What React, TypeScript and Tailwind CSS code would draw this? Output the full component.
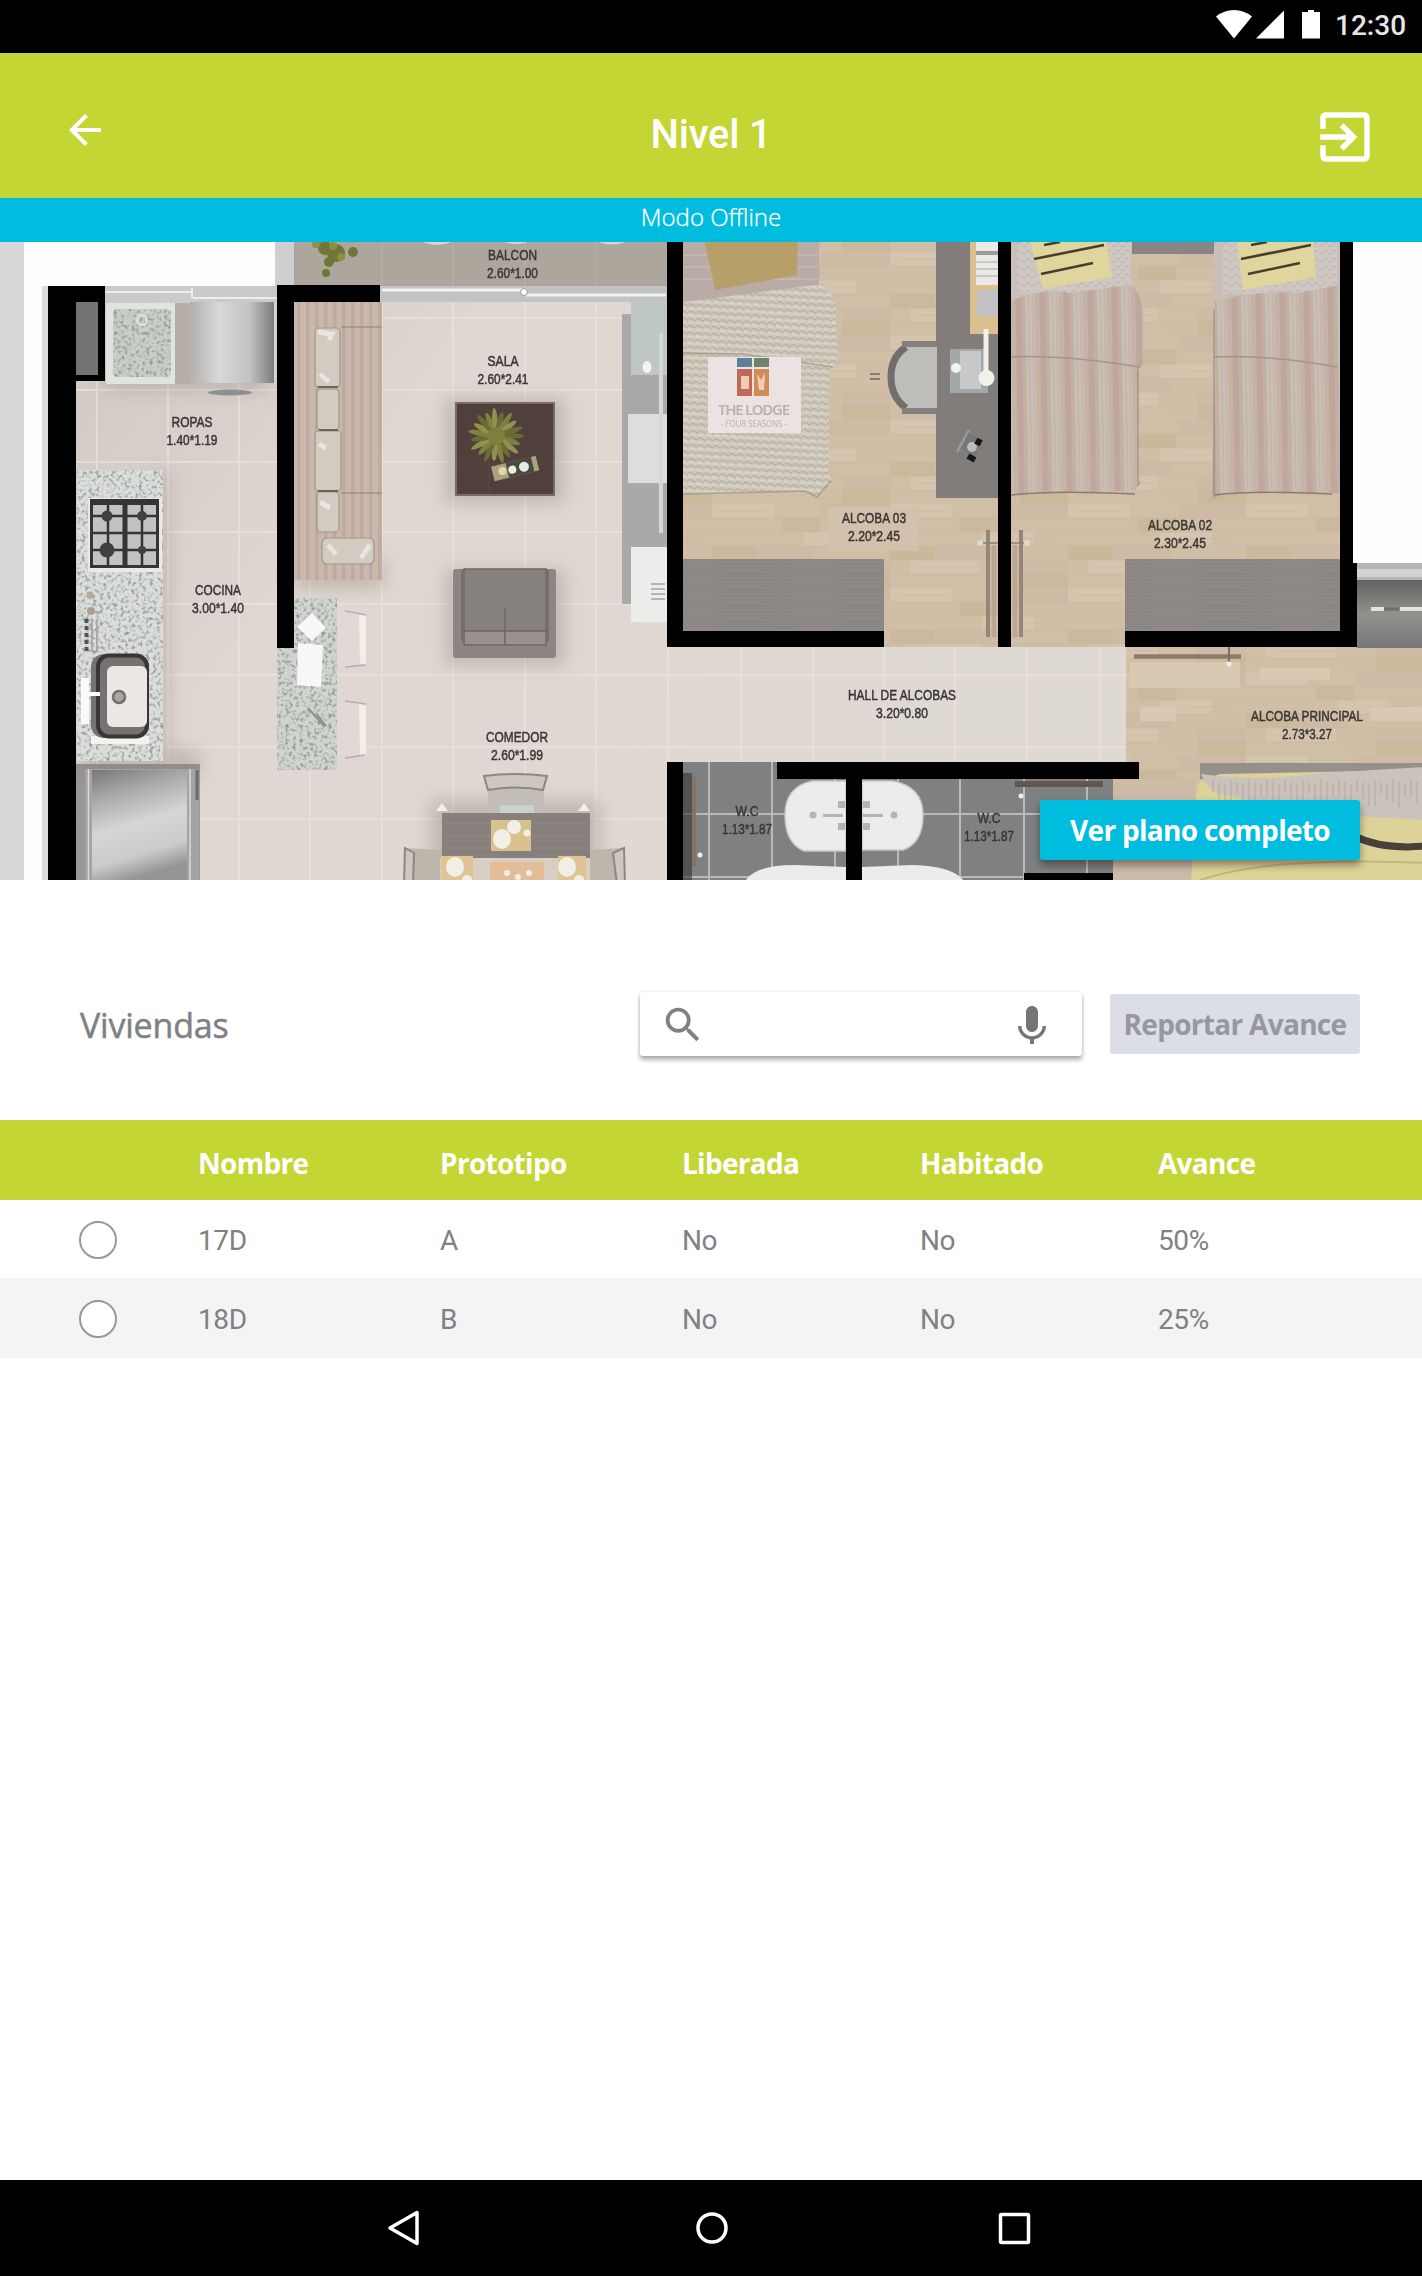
import React from "react";

const TILE_X = [97, 168, 239, 310, 382, 453, 525, 596, 668, 741, 813, 884, 955, 1027, 1100];
const TILE_Y = [318, 390, 462, 532, 604, 675, 747, 819];
const WC_X = [709, 772, 835, 898, 960, 1024, 1087];

type Room = { x: number; y: number; size: [number, number]; lines: [string, string] };

const ROOMS: Room[] = [
  { x: 192, y: 427, size: [41, 51], lines: ["ROPAS", "1.40*1.19"] },
  { x: 218, y: 595, size: [46, 52], lines: ["COCINA", "3.00*1.40"] },
  { x: 512.5, y: 260, size: [49, 51], lines: ["BALCON", "2.60*1.00"] },
  { x: 503, y: 366, size: [31, 51], lines: ["SALA", "2.60*2.41"] },
  { x: 517, y: 742, size: [62, 52], lines: ["COMEDOR", "2.60*1.99"] },
  { x: 874, y: 523, size: [64, 52], lines: ["ALCOBA 03", "2.20*2.45"] },
  { x: 1180, y: 530, size: [64, 52], lines: ["ALCOBA 02", "2.30*2.45"] },
  { x: 902, y: 700, size: [108, 52], lines: ["HALL DE ALCOBAS", "3.20*0.80"] },
  { x: 1307, y: 721, size: [112, 50], lines: ["ALCOBA PRINCIPAL", "2.73*3.27"] },
  { x: 747, y: 816, size: [23, 50], lines: ["W.C", "1.13*1.87"] },
  { x: 989, y: 823, size: [23, 50], lines: ["W.C", "1.13*1.87"] },
];

const WALLS: [number, number, number, number][] = [
  [48, 286, 28, 594],
  [48, 286, 57, 16],
  [98, 286, 7, 95],
  [76, 375, 29, 6],
  [277, 285, 17, 363],
  [277, 285, 103, 17],
  [667, 242, 16, 405],
  [667, 631, 217, 16],
  [998, 242, 13, 405],
  [1340, 242, 13, 405],
  [1340, 563, 17, 84],
  [1125, 631, 232, 16],
  [777, 762, 362, 17],
  [667, 762, 16, 118],
  [846, 779, 16, 101],
  [1024, 873, 89, 7],
];

function Plant({ x, y, r }: { x: number; y: number; r: number }) {
  return (
    <g transform={`translate(${x} ${y})`}>
      {Array.from({ length: 19 }, (_, i) => (
        <ellipse
          key={i}
          cx={r * 0.52}
          rx={r * (i % 2 ? 0.38 : 0.48)}
          ry={r * 0.1}
          fill={["#6a6c35", "#7f7f42", "#93924d"][i % 3]}
          transform={`rotate(${i * 19})`}
        />
      ))}
      <circle r={r * 0.32} fill="#7d7f3f" />
    </g>
  );
}

function StripedBed({ x, w, flip }: { x: number; w: number; flip?: boolean }) {
  const right = x + w;
  return (
    <g>
      <rect x={x} y="242" width={flip ? w : w - 12} height="60" fill="#c9bfb8" />
      <rect x={x + (flip ? 9 : 6)} y="242" width={flip ? w - 12 : w - 18} height="52" fill="url(#linen)" />
      <path
        d={flip ? `M${x + 23} 242h76l3 35-73 13z` : `M${x + 19} 242h76l6 35-69 12z`}
        fill="#e0d59d"
      />
      <g stroke="#473d31" strokeWidth="2.6" transform={`translate(${x + (flip ? 4 : 0)} 0)`}>
        <path d="M33 245 49 242M23 259 93 245M30 274 82 263" />
      </g>
      <path
        d={
          flip
            ? `M${x} 301Q${x + 40} 290 ${x + 85} 293L${right} 285V493H${x + 13}L${x - 2} 500L${x + 1} 370Z`
            : `M${x} 301Q${x + 30} 288 ${x + 60} 293L${x + 118} 285Q${right} 291 ${right} 318V365L${right - 5} 370V482L${right - 1} 481L${right - 13} 497L${right - 22} 491L${x} 495Z`
        }
        fill="url(#stripes)"
      />
      <path
        d={`M${x} 357Q${x + 50} 354 ${right - 3} 367`}
        fill="none"
        stroke="#a6938a"
        strokeWidth="1.6"
      />
      <path d={`M${x} 495Q${x + 40} 490 ${right - 8} 494`} fill="none" stroke="#8f796c" strokeWidth="1.6" />
      <path
        d={flip ? `M${x} 310V494` : `M${right - 5} 370V486`}
        stroke="#90807a"
        strokeWidth="1.5"
        opacity="0.6"
      />
    </g>
  );
}

function FloorPlan() {
  return (
    <svg viewBox="0 242 1422 638" className="block h-[638px] w-full" aria-label="Plano del nivel 1">
      <defs>
        <linearGradient id="floor" x1="0" x2="1" y2="0.4">
          <stop offset="0" stopColor="#cfc8c3" />
          <stop offset="0.35" stopColor="#dfd7d1" />
          <stop offset="1" stopColor="#dfd9d4" />
        </linearGradient>
        <linearGradient id="steel">
          <stop offset="0" stopColor="#b3b0ac" />
          <stop offset="0.35" stopColor="#d8d8da" />
          <stop offset="0.7" stopColor="#c3c3c3" />
          <stop offset="1" stopColor="#7d7d7d" />
        </linearGradient>
        <linearGradient id="fridge" x1="0" x2="0.25" y1="0" y2="1">
          <stop offset="0" stopColor="#777777" />
          <stop offset="0.25" stopColor="#a8a8a8" />
          <stop offset="0.55" stopColor="#d6d6d6" />
          <stop offset="0.82" stopColor="#cacaca" />
          <stop offset="1" stopColor="#959595" />
        </linearGradient>
        <linearGradient id="outer" y2="1" x2="0">
          <stop offset="0" stopColor="#626260" />
          <stop offset="0.5" stopColor="#91918e" />
          <stop offset="1" stopColor="#777777" />
        </linearGradient>
        <pattern id="wood" width="178" height="84" patternUnits="userSpaceOnUse">
          <rect width="178" height="84" fill="#d0bea6" />
          <path d="M0 0h62v14H0zM92 28h52v14H92zM20 56h70v14H20z" fill="#d5c4ae" />
          <path d="M70 14h38v14H70zM0 42h44v14H0zM130 70h48v14h-48z" fill="#cbb99c" />
          <path d="M110 0h68v14h-68zM44 42h58v14H44zM130 56h48v14h-48z" fill="#cfbba5" />
          <path d="M0 14h178M0 28h178M0 42h178M0 56h178M0 70h178" stroke="#c6b299" strokeWidth="0.8" opacity="0.5" />
          <path d="M8 7h46M120 35h44M30 63h60M65 21h50M5 49h40M100 78h60" stroke="#c3ae93" strokeWidth="1" opacity="0.45" />
        </pattern>
        <pattern id="stripes" width="24" height="40" patternUnits="userSpaceOnUse" patternTransform="rotate(-1)">
          <rect width="24" height="40" fill="#c5b3a6" />
          <rect x="2" width="6" height="40" fill="#bfa79d" />
          <rect x="12" width="9" height="40" fill="#cac0b6" />
          <path d="M15 0v40M19 0v40M10 0v40" stroke="#b9aaa0" strokeWidth="0.8" />
        </pattern>
        <pattern id="sofa" width="9" height="20" patternUnits="userSpaceOnUse">
          <rect width="9" height="20" fill="#cbb8ad" />
          <rect width="3.5" height="20" fill="#bfaa9f" />
        </pattern>
        <pattern id="knit" width="8" height="7" patternUnits="userSpaceOnUse" patternTransform="rotate(3)">
          <rect width="8" height="7" fill="#cfc8bc" />
          <path d="M0 2.5q3-2 5 .5l3 1" fill="none" stroke="#b4ab9c" strokeWidth="1.3" />
          <path d="M0 5.8h6" stroke="#ded9cf" strokeWidth="1.3" />
        </pattern>
        <pattern id="linen" width="9" height="8" patternUnits="userSpaceOnUse">
          <rect width="9" height="8" fill="#cfc7c2" />
          <path d="M0 3h4M5 6h4" stroke="#bcb2ac" strokeWidth="1.2" />
        </pattern>
        <pattern id="grain" width="120" height="16" patternUnits="userSpaceOnUse">
          <rect width="120" height="16" fill="#8d8886" />
          <path d="M0 4h70M40 10h80M0 14h50" stroke="#827c7a" strokeWidth="1" opacity="0.6" />
          <path d="M60 6h50M10 11h30" stroke="#969190" strokeWidth="1" opacity="0.5" />
        </pattern>
        <filter id="speckle" x="0" y="0" width="1" height="1" colorInterpolationFilters="sRGB">
          <feTurbulence type="fractalNoise" baseFrequency="0.28" numOctaves="2" seed="4" />
          <feColorMatrix values="0 0 0 0 0.5  0 0 0 0 0.54  0 0 0 0 0.51  0 0 0 2.6 -1.25" />
          <feComposite in2="SourceGraphic" operator="in" result="n" />
          <feMerge>
            <feMergeNode in="SourceGraphic" />
            <feMergeNode in="n" />
          </feMerge>
        </filter>
        <filter id="soft" x="-20%" y="-20%" width="140%" height="140%" colorInterpolationFilters="sRGB">
          <feGaussianBlur stdDeviation="9" />
        </filter>
        <filter id="lens" x="0" y="0" width="1" height="1" colorInterpolationFilters="sRGB">
          <feGaussianBlur stdDeviation="0.7" />
        </filter>
      </defs>

      <rect x="0" y="242" width="1422" height="638" fill="#fefefe" />
      <g filter="url(#lens)">
        <rect x="20" y="238" width="1406" height="646" fill="#fefefe" />
        <rect x="42" y="286" width="6" height="598" fill="#dedad6" />

        {/* tiled floor */}
        <rect x="76" y="286" width="1064" height="598" fill="url(#floor)" />
        <g stroke="#ebe4dc" strokeWidth="2" opacity="0.7">
          {TILE_X.map((x) => (
            <path key={x} d={`M${x} 300V884`} />
          ))}
          {TILE_Y.map((y) => (
            <path key={y} d={`M76 ${y}H1126`} />
          ))}
        </g>
        <g filter="url(#soft)" fill="#877b73" opacity="0.35">
          <rect x="105" y="372" width="165" height="18" />
          <rect x="445" y="398" width="120" height="105" />
          <rect x="445" y="570" width="120" height="95" />
          <rect x="430" y="800" width="170" height="80" />
          <rect x="80" y="750" width="120" height="25" />
          <rect x="294" y="560" width="90" height="28" />
          <rect x="155" y="470" width="14" height="280" />
        </g>

        {/* balcony */}
        <rect x="275" y="238" width="20" height="48" fill="#cfced0" />
        <rect x="294" y="238" width="373" height="48" fill="#aca69d" />
        <path d="M382 238V286M453 238V286M525 238V286M596 238V286" stroke="#b5aea3" strokeWidth="1.5" />
        <g fill="#6f7638">
          <circle cx="325" cy="248" r="7" />
          <circle cx="336" cy="253" r="9" />
          <circle cx="329" cy="262" r="5" />
          <circle cx="326" cy="273" r="4" />
          <circle cx="353" cy="252" r="5" />
        </g>
        <g fill="#8c9046">
          <circle cx="333" cy="246" r="4" />
          <circle cx="341" cy="257" r="4" />
          <circle cx="316" cy="244" r="4" />
        </g>
        <path d="M422 242q15 6 30 0M504 242q12 4 24 0M598 242q14 5 28 0" fill="#d8d6cf" />
        <rect x="380" y="286" width="287" height="16" fill="#c2c3c4" />
        <path d="M382 290H524M526 295H666" stroke="#f2f3f4" strokeWidth="3" />
        <circle cx="524" cy="292" r="3.5" fill="#ffffff" stroke="#999999" />
        <rect x="105" y="286" width="172" height="16" fill="#cbcaca" />
        <path d="M105 292H191M193 298H277M192 288v10" stroke="#ededed" strokeWidth="2" />

        {/* laundry */}
        <rect x="76" y="302" width="22" height="73" fill="#757372" />
        <rect x="106" y="303" width="69" height="81" fill="#e0e4de" />
        <rect x="113" y="309" width="58" height="68" rx="4" fill="#c8cfc8" filter="url(#speckle)" />
        <circle cx="142" cy="320" r="5" fill="none" stroke="#dfe4de" strokeWidth="2" />
        <rect x="175" y="303" width="16" height="81" fill="#b5aea7" />
        <rect x="190" y="302" width="84" height="81" fill="url(#steel)" />
        <rect x="274" y="302" width="3" height="81" fill="#d5d4d2" />
        <ellipse cx="230" cy="392.5" rx="22" ry="3" fill="#8b9191" />

        {/* kitchen */}
        <rect x="77" y="470" width="86" height="291" fill="#dcdedb" filter="url(#speckle)" />
        <rect x="88" y="498" width="74" height="74" fill="#e9e9e6" />
        <rect x="90" y="499" width="69" height="69" fill="#c2c2c2" />
        <g stroke="#343434" strokeWidth="3" fill="none">
          <rect x="91.5" y="500.5" width="66" height="66" />
          <path d="M125 500V567M108 500V567M142 500V567" strokeWidth="2.5" />
          <path d="M91 516H158M91 533H158M91 550H158" strokeWidth="2.5" />
          <path d="M125 500V567M91 502.5H158" strokeWidth="5" />
        </g>
        <g fill="#404040">
          <circle cx="107" cy="516" r="5.5" />
          <circle cx="142" cy="516" r="5" />
          <circle cx="107" cy="550" r="7.5" />
          <circle cx="142" cy="550" r="4" />
        </g>
        <circle cx="90" cy="595" r="3.5" fill="#baa999" />
        <circle cx="91" cy="611" r="4" fill="#ac9d90" />
        <path d="M86.5 619V652" stroke="#555555" strokeWidth="4" strokeDasharray="4 3" />
        <path d="M92 619V652M97 619V652" stroke="#9b9b9b" strokeWidth="1.5" />
        <rect x="91" y="736" width="58" height="8" fill="#f3f2ef" />
        <rect x="91" y="654" width="58" height="84" rx="13" fill="#777272" />
        <rect x="98" y="655.5" width="49" height="81" rx="11" fill="none" stroke="#383635" strokeWidth="4" />
        <rect x="107" y="666" width="40" height="61" rx="6" fill="#ece7e5" />
        <circle cx="119" cy="697" r="6" fill="#aaa8a6" stroke="#73706e" strokeWidth="2.5" />
        <path d="M81 678h8v46h-8zM88 692h12v4H88z" fill="#fafafa" />
        <rect x="76" y="764" width="124" height="120" fill="#6e6c6a" opacity="0.6" />
        <rect x="85" y="769" width="114" height="115" fill="#a2a3a4" />
        <rect x="92" y="770" width="95" height="114" fill="url(#fridge)" />
        <path d="M88.5 769V884M190 769V884" stroke="#d9dadb" strokeWidth="1.5" />
        <path d="M197 770V800" stroke="#6b6b6b" strokeWidth="3" />

        {/* breakfast bar */}
        <rect x="337" y="612" width="28" height="54" fill="#e3d9d4" />
        <rect x="337" y="702" width="28" height="54" fill="#e3d9d4" />
        <path d="M359 613l7 2v50l-6-2zM359 704l7 2v50l-6-2z" fill="#f1efec" />
        <path d="M345 611l21 4M345 667l21-2M345 701l21 3M345 758l20-3" stroke="#b5afa9" strokeWidth="1.5" />
        <path d="M294 598h43v172h-60V648h17z" fill="#d1d4cf" filter="url(#speckle)" />
        <path d="M312 613l14 15-14 13-15-14zM298 643l25 2-2 42-24-2z" fill="#f7f7f7" />
        <path d="M308 708l16 18M316 713l10 13" stroke="#8d938e" strokeWidth="2" />

        {/* living room */}
        <rect x="294" y="302" width="88" height="278" fill="url(#sofa)" />
        <path d="M341 327H382M341 493H382" stroke="#a58f85" strokeWidth="1.5" />
        <g fill="#d1cbc2" stroke="#a1958b" strokeWidth="1.2">
          <rect x="315" y="328" width="25" height="59" rx="4" />
          <rect x="317" y="389" width="22" height="41" rx="4" />
          <rect x="315" y="431" width="26" height="60" rx="4" />
          <rect x="317" y="492" width="22" height="40" rx="4" />
          <rect x="322" y="538" width="52" height="26" rx="5" />
        </g>
        <path d="M318 387h20M319 430h19M318 491h20" stroke="#6f6359" strokeWidth="2" />
        <path d="M318 332l14 2-3 6M320 374l9 8M319 444l7 4M320 502l10 6M328 545l8 9M370 545l-9 13" stroke="#e9e5de" strokeWidth="5" fill="none" />
        <rect x="456" y="403" width="98" height="92" fill="#503f3b" stroke="#776d68" strokeWidth="2" />
        <path d="M489 404V494M457 464H553" stroke="#5a4944" strokeWidth="1" />
        <Plant x={496} y={436} r={28} />
        <g transform="rotate(-14 515 468)">
          <rect x="492" y="461" width="46" height="15" fill="#aaa17f" />
          <rect x="507" y="461" width="26" height="15" fill="#494b3c" />
          <circle cx="502" cy="468" r="4" fill="#e6d8a5" />
          <circle cx="512" cy="469" r="4" fill="#edf0dd" />
          <circle cx="524" cy="469" r="5" fill="#e3ebe5" />
        </g>
        <rect x="453" y="569" width="103" height="89" rx="3" fill="#8c8583" />
        <rect x="464" y="569" width="82" height="62" fill="#86807e" stroke="#6e6765" strokeWidth="1.5" />
        <path d="M462 570V641M548 570V641M464 631h82v14h-82zM505 608V645" fill="#979190" stroke="#6e6765" strokeWidth="1.5" />
        <rect x="622" y="314" width="45" height="290" fill="#a9a9a8" />
        <rect x="631" y="302" width="36" height="73" fill="#bec7c3" />
        <ellipse cx="647" cy="367" rx="4.5" ry="6" fill="#f5f5ee" />
        <rect x="628" y="414" width="39" height="69" fill="#dddddf" />
        <path d="M659 333h4v200h-4z" fill="#d4d8d5" />
        <rect x="631" y="547" width="36" height="75" fill="#ecedeb" />
        <path d="M651 584h14M651 589h14M651 594h14M651 599h14" stroke="#b4b4b1" strokeWidth="2" />

        {/* dining table */}
        <rect x="488" y="784" width="56" height="30" fill="#c3beb5" />
        <path d="M484 776q33-4 63 0l-4 14q-28-5-55 0z" fill="#ccc8c0" stroke="#8d8780" strokeWidth="2" />
        <rect x="500" y="805" width="34" height="8" fill="#c9d3ce" />
        <path d="M404 848l38 2v34h-38zM590 850l34-2v36h-34z" fill="#bcb6ac" />
        <path d="M405 848l9 5-1 31h-9zM624 848l-11 5 4 31h8z" fill="#ccc8c0" stroke="#8d8780" strokeWidth="2" />
        <rect x="442" y="813" width="148" height="71" fill="#87807c" />
        <path d="M444 823H589M444 836H589M444 848H589" stroke="#928b86" strokeWidth="1" />
        <rect x="440" y="858" width="150" height="26" fill="#d8cec3" />
        <rect x="491" y="820" width="40" height="31" fill="#d8c08f" />
        <path d="M441 856h32v28h-32zM558 856h28v28h-28z" fill="#e0c494" />
        <rect x="490" y="862" width="54" height="22" fill="#e2bd98" />
        <g fill="#f2f0e6">
          <ellipse cx="502" cy="839" rx="9" ry="10" />
          <circle cx="514" cy="827" r="7" />
          <circle cx="527" cy="833" r="3.5" />
          <ellipse cx="455" cy="867" rx="9" ry="10" />
          <ellipse cx="567" cy="867" rx="9" ry="10" />
          <circle cx="467" cy="880" r="5" />
          <circle cx="579" cy="880" r="5" />
          <circle cx="507" cy="873" r="3" />
          <circle cx="518" cy="877" r="3" />
          <circle cx="529" cy="873" r="3" />
          <path d="M436 811l6-8 6 8zM578 811l6-8 6 8z" />
        </g>

        {/* bedroom floors */}
        <rect x="683" y="238" width="315" height="409" fill="url(#wood)" />
        <rect x="1011" y="238" width="329" height="409" fill="url(#wood)" />
        <rect x="1126" y="647" width="300" height="237" fill="url(#wood)" />
        <rect x="1113" y="779" width="83" height="105" fill="#ccbba7" />
        <path d="M1130 662h110v26h-110zM1260 668h70v12h-70zM1140 707h36v14h-36zM1370 707h56v14h-56z" fill="#d9c8b2" />
        <rect x="828" y="507" width="90" height="44" fill="#d3c1ad" />

        {/* bedroom 03 */}
        <path d="M683 238h136v54l-136 14z" fill="#b9aba5" />
        <path d="M683 255H818M683 267H818M683 279H818" stroke="#c6bab4" strokeWidth="1.5" />
        <path d="M704 238h94l-1 37-82 15z" fill="#b79f69" />
        <path d="M683 494V302l85-11 55-7 12 16 3 63-8 4-2 105 5 11-17 14-10-5z" fill="url(#knit)" />
        <path d="M683 353l60 1 90 13M683 494l122-3 12 6 14-16" stroke="#948978" strokeWidth="1.5" fill="none" opacity="0.6" />
        <rect x="708" y="357" width="93" height="76" fill="#ebe3e1" />
        <path d="M737 358h15v9h-15z" fill="#5d819b" />
        <path d="M754 358h15v9h-15z" fill="#6f8466" />
        <path d="M737 369h15v27h-15z" fill="#c0695a" />
        <path d="M754 369h15v27h-15z" fill="#cf8b58" />
        <path d="M741 376h8v13h-8zM757 374l4 6 4-7-1 17h-5z" fill="#efcdb6" />
        <rect x="936" y="238" width="62" height="260" fill="#827d7b" />
        <rect x="970" y="238" width="28" height="96" fill="#dcbf8e" />
        <path d="M976 238h22v47h-22z" fill="#e9e9e7" />
        <path d="M976 253h22" stroke="#9c9c9b" strokeWidth="4" />
        <path d="M976 262h22M976 269h22M976 276h22" stroke="#bdbdbb" strokeWidth="1.5" />
        <rect x="977" y="290" width="21" height="26" fill="#c1c1c4" />
        <path d="M937 346h-27q-19 8-19 31t19 32h27" fill="#bfbdba" />
        <path d="M906 347q-15 10-15 30t15 31" fill="none" stroke="#6f6e6b" strokeWidth="7" />
        <path d="M937 344h-35M937 411h-35" stroke="#83827e" strokeWidth="6" />
        <path d="M870 374h10M870 379h10" stroke="#8a7c6c" strokeWidth="2" />
        <path d="M950 349h38v44h-38z" fill="#a5a8a9" />
        <path d="M960 351h21v38h-21z" fill="#c7c9ca" />
        <circle cx="956" cy="368" r="5" fill="#f2f2ef" />
        <path d="M986 329V374" stroke="#f1f0eb" strokeWidth="5" />
        <circle cx="986.5" cy="378" r="8" fill="#f1f1e5" />
        <path d="M969 430l-12 22" stroke="#9c9b9b" strokeWidth="2.5" />
        <path d="M968 433l14 7-8 18-12-9z" fill="#777777" />
        <circle cx="972" cy="447" r="5" fill="#b9bec2" />
        <path d="M968 456l7 4M980 439l-3 6" stroke="#151515" strokeWidth="6" />
        <rect x="683" y="559" width="201" height="72" fill="url(#grain)" />

        {/* bedroom 02 */}
        <rect x="1132" y="238" width="90" height="16" fill="#888685" />
        <StripedBed x={1011} w={132} />
        <StripedBed x={1214} w={126} flip />
        <rect x="1125" y="559" width="215" height="72" fill="url(#grain)" />

        {/* doors */}
        <path d="M988 530V637M1021 530V637" stroke="#968677" strokeWidth="4" />
        <path d="M994 545V637M1015 545V637" stroke="#b09f8e" strokeWidth="5" opacity="0.7" />
        <path d="M978 543H1030" stroke="#8a8177" strokeWidth="1.5" />
        <circle cx="980" cy="543" r="3" fill="#ddd8d1" />
        <circle cx="1027" cy="543" r="3" fill="#ddd8d1" />
        <path d="M1134 656.5H1241" stroke="#8b7b6c" strokeWidth="4.5" />
        <path d="M1229 647v16" stroke="#776e65" strokeWidth="2" />
        <circle cx="1229" cy="664" r="2.5" fill="#eeeeea" />

        {/* exterior right */}
        <rect x="1357" y="563" width="69" height="18" fill="#b5b5b7" />
        <path d="M1357 573H1426" stroke="#d2d3d7" strokeWidth="8" />
        <rect x="1357" y="580" width="69" height="68" fill="url(#outer)" />
        <path d="M1371 609h13M1400 609h26" stroke="#e2e2e0" strokeWidth="4" />
        <path d="M1384 609h15" stroke="#6e6e6d" strokeWidth="3" />

        {/* bathrooms */}
        <rect x="683" y="762" width="430" height="122" fill="#7f8081" />
        <g stroke="#b8b9b9" strokeWidth="2">
          {WC_X.map((x) => (
            <path key={x} d={`M${x} 762V884`} />
          ))}
          <path d="M683 814H1113M683 877H1113" />
        </g>
        <rect x="683" y="773" width="9" height="111" fill="#343230" opacity="0.6" />
        <path d="M694 777V866" stroke="#86705f" strokeWidth="3.5" />
        <circle cx="700" cy="855" r="2.5" fill="#eeeeee" />
        <path d="M846 781h-34q-27 6-27 34t19 36h42zM862 781h31q30 6 30 34t-20 35h-41z" fill="#ecedeb" stroke="#c7c8c7" strokeWidth="1.5" />
        <g fill="#b3b5b4">
          <circle cx="813" cy="815" r="3.5" />
          <circle cx="894" cy="815" r="3.5" />
          <path d="M838 801h7v7h-7zM838 823h7v7h-7zM863 801h7v7h-7zM863 823h7v7h-7zM823 814h20v3h-20zM863 814h20v3h-20z" />
        </g>
        <path d="M744 884q7-19 51-19l51 2v17zM862 867l50-2q45 1 54 19H862z" fill="#ecedeb" />
        <path d="M1015 784h88" stroke="#62574f" strokeWidth="6" />
        <circle cx="1021" cy="796" r="2.5" fill="#eeeeee" />

        {/* master bedroom */}
        <rect x="1200" y="763" width="226" height="16" fill="#94908c" />
        <path d="M1191 884l5-90 4-13 20-7 206-4v114z" fill="#ddd399" />
        <path d="M1201 774q60 8 120-1l105-6v53l-90-5-118-21q-13-8-17-20z" fill="#cac2bb" />
        <g stroke="#b0a69d" strokeWidth="1.5" opacity="0.6">
          {Array.from({ length: 36 }, (_, i) => (
            <path key={i} d={`M${1213 + i * 6} ${780 + (i % 3) * 2}v${12 + (i % 4) * 5}`} />
          ))}
        </g>
        <path d="M1354 836q28 14 72 10" stroke="#49403a" strokeWidth="7" fill="none" />
        <path d="M1200 880q70-24 226-17" stroke="#c3b67f" strokeWidth="2" fill="none" />

        {/* walls */}
        <g fill="#000000">
          {WALLS.map(([x, y, w, h], i) => (
            <rect key={i} x={x} y={y} width={w} height={h} />
          ))}
        </g>

        {/* room names */}
        <g
          fill="#3b3634"
          stroke="#3b3634"
          strokeWidth="0.5"
          fontFamily="'Liberation Sans', sans-serif"
          fontSize="15"
          textAnchor="middle"
        >
          {ROOMS.map(({ x, y, size, lines }, i) => (
            <g key={i}>
              <text x={x} y={y} textLength={size[0]} lengthAdjust="spacingAndGlyphs">
                {lines[0]}
              </text>
              <text x={x} y={y + 17.5} textLength={size[1]} lengthAdjust="spacingAndGlyphs">
                {lines[1]}
              </text>
            </g>
          ))}
        </g>
        <g fill="#b9b2b3" fontFamily="'Noto Sans', sans-serif" textAnchor="middle">
          <text x="754" y="415" fontSize="15" fontWeight="600" textLength="72">
            THE LODGE
          </text>
          <text x="754" y="427" fontSize="8" textLength="66">
            - FOUR SEASONS -
          </text>
        </g>
      </g>
      <rect x="0" y="242" width="24" height="638" fill="#d8d8d8" />
    </svg>
  );
}

const COLUMNS = "grid grid-cols-[198px_242px_242px_238px_238px_1fr] items-center";

const ROWS = [
  { nombre: "17D", prototipo: "A", liberada: "No", habitado: "No", avance: "50%" },
  { nombre: "18D", prototipo: "B", liberada: "No", habitado: "No", avance: "25%" },
];

function StatusBar() {
  return (
    <div className="flex h-[53px] items-start justify-end bg-black pr-[16px] text-white">
      <svg className="mt-[10px] h-7 w-9" viewBox="0 0 36 28" fill="currentColor">
        <path d="M0 6.5Q8 0 18 0t18 6.5L18 28.5z" />
      </svg>
      <svg className="mt-[10px] ml-1 h-[29px] w-7" viewBox="0 0 28 29" fill="currentColor">
        <path d="M28 .5v28H0z" />
      </svg>
      <svg className="mt-[10px] ml-[18px] h-[29px] w-[18px]" viewBox="0 0 18 29" fill="currentColor">
        <path d="M6 0h6v2h6v26.500H0V2h6z" />
      </svg>
      <span className="mt-[6px] ml-[15px] w-[71px] text-right font-[Roboto] text-[28px] leading-10 font-medium text-[#e6e6e6]">
        12:30
      </span>
    </div>
  );
}

export default function App() {
  return (
    <div className="flex h-[2276px] w-[1422px] flex-col overflow-hidden bg-white">
      <StatusBar />

      <header className="grid h-[145px] grid-cols-[1fr_auto_1fr] bg-[#c4d633] text-white">
        <button className="mt-[53px] ml-[61px] h-12 w-12" aria-label="Volver">
          <svg className="h-12 w-12" viewBox="0 0 24 24" fill="currentColor">
            <path d="M20 11H7.83l5.59-5.59L12 4l-8 8 8 8 1.41-1.41L7.83 13H20v-2z" />
          </svg>
        </button>
        <h1 className="mt-[57px] font-[Roboto] text-[40px] leading-[50px] font-medium tracking-[-0.2px]">Nivel 1</h1>
        <button className="mt-[51px] mr-[44px] h-[66px] w-[66px] justify-self-end" aria-label="Salir">
          <svg className="h-[66px] w-[66px]" viewBox="0 0 24 24" fill="currentColor">
            <path d="M10.09 15.59 11.5 17l5-5-5-5-1.41 1.41L12.67 11H3v2h9.67l-2.58 2.59zM19 3H5c-1.11 0-2 .9-2 2v4h2V5h14v14H5v-4H3v4c0 1.1.89 2 2 2h14c1.1 0 2-.9 2-2V5c0-1.1-.9-2-2-2z" />
          </svg>
        </button>
      </header>

      <div className="h-[44px] bg-[#00bcdf] text-center font-['Open_Sans'] text-[24px] leading-[37px] font-light text-white [-webkit-text-stroke:0.3px]">
        Modo Offline
      </div>

      <section className="relative h-[638px]">
        <FloorPlan />
        <button className="absolute right-[62px] bottom-5 h-[60px] w-[320px] rounded-[3px] bg-[#00bcdf] font-['Open_Sans'] text-[28px] leading-[58px] font-bold tracking-[-0.7px] whitespace-nowrap text-white shadow-[0_5px_8px_rgba(0,0,0,0.4)]">
          Ver plano completo
        </button>
      </section>

      <section className="flex h-[240px] items-start pt-[112px] pr-[62px] pl-[80px]">
        <h2 className="mt-[6px] w-[560px] font-['Open_Sans'] text-[34px] leading-[54px] font-medium tracking-[-0.2px] text-[#808184] [-webkit-text-stroke:0.5px]">
          Viviendas
        </h2>
        <div className="flex h-16 w-[442px] items-start justify-between rounded-[3px] bg-white pt-2.5 pr-[26px] pl-5 shadow-[0_4px_4px_rgba(0,0,0,0.3),0_0_3px_rgba(0,0,0,0.14)]">
          <svg className="h-[46px] w-[46px] text-[#808184]" viewBox="0 0 24 24" fill="currentColor">
            <path d="M15.5 14h-.79l-.28-.27A6.471 6.471 0 0 0 16 9.5 6.5 6.5 0 1 0 9.5 16c1.61 0 3.09-.59 4.23-1.57l.27.28v.79l5 4.99L20.49 19l-4.99-5zm-6 0C7.01 14 5 11.99 5 9.5S7.01 5 9.5 5 14 7.01 14 9.5 11.99 14 9.5 14z" />
          </svg>
          <svg className="h-12 w-12 text-[#757575]" viewBox="0 0 24 24" fill="currentColor">
            <path d="M12 15c1.66 0 2.99-1.34 2.99-3L15 5c0-1.66-1.34-3-3-3S9 3.34 9 5v7c0 1.66 1.34 3 3 3zm5.3-3c0 3-2.54 5.1-5.3 5.1S6.7 15 6.700 12H5c0 3.41 2.72 6.23 6 6.72V21h2v-2.28c3.28-.48 6-3.3 6-6.72h-1.7z" />
          </svg>
        </div>
        <button className="mt-[2px] ml-7 h-[60px] w-[250px] rounded-[3px] bg-[#dbdee6] font-['Open_Sans'] text-[28px] leading-[58px] font-bold tracking-[-0.7px] whitespace-nowrap text-[#97989b]">
          Reportar Avance
        </button>
      </section>

      <section>
        <div className={`${COLUMNS} h-20 bg-[#c4d633] pt-1.5 font-['Open_Sans'] text-[28px] font-bold tracking-[-0.7px] text-white`}>
          <span />
          <span>Nombre</span>
          <span>Prototipo</span>
          <span>Liberada</span>
          <span>Habitado</span>
          <span>Avance</span>
        </div>
        {ROWS.map((row) => (
          <div
            key={row.nombre}
            className={`${COLUMNS} h-[78px] pt-[3px] font-[Roboto] text-[28px] tracking-[-0.4px] text-[#808184] even:bg-white odd:h-20 odd:bg-[#f4f4f4]`}
          >
            <span className="-mt-px ml-[79px] h-[38px] w-[38px] rounded-full border-2 border-[#97989a] bg-white" />
            <span>{row.nombre}</span>
            <span>{row.prototipo}</span>
            <span>{row.liberada}</span>
            <span>{row.habitado}</span>
            <span>{row.avance}</span>
          </div>
        ))}
      </section>

      <nav className="mt-auto flex h-24 items-center bg-black text-white">
        <svg className="ml-[387px] h-9 w-8" viewBox="0 0 32 36" fill="none" stroke="currentColor" strokeWidth="3.5">
          <path d="M30 2.5v31L3 18z" strokeLinejoin="round" />
        </svg>
        <svg className="ml-[275px] h-9 w-9" viewBox="0 0 36 36" fill="none" stroke="currentColor" strokeWidth="3.5">
          <circle cx="18" cy="18" r="14" />
        </svg>
        <svg className="ml-[266px] h-9 w-9" viewBox="0 0 36 36" fill="none" stroke="currentColor" strokeWidth="3.5">
          <rect x="4.5" y="4.5" width="28" height="28" rx="1" />
        </svg>
      </nav>
    </div>
  );
}
